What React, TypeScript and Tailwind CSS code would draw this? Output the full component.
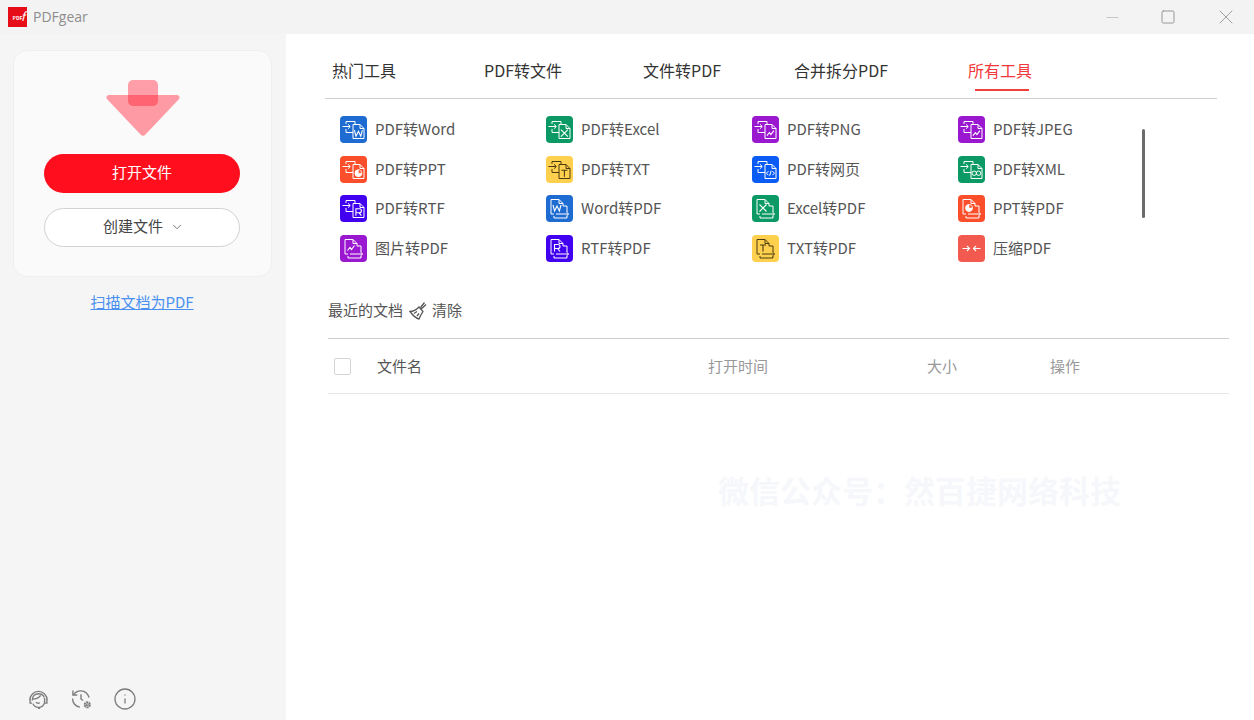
import { ChevronDown, Info, Minus, Square, X } from "lucide-react";

type Glyph = "w" | "x" | "p" | "t" | "r" | "img" | "code" | "xml";
type Tool = { label: string; color: string; dir: "from" | "to"; glyph: Glyph; ink?: string };

const tabs = ["热门工具", "PDF转文件", "文件转PDF", "合并拆分PDF", "所有工具"];

const tools: (Tool | { label: string; color: string; compress: true })[] = [
  { label: "PDF转Word", color: "bg-[#1e6bd2]", dir: "from", glyph: "w" },
  { label: "PDF转Excel", color: "bg-[#0b9a65]", dir: "from", glyph: "x" },
  { label: "PDF转PNG", color: "bg-[#9a18cf]", dir: "from", glyph: "img" },
  { label: "PDF转JPEG", color: "bg-[#9a18cf]", dir: "from", glyph: "img" },
  { label: "PDF转PPT", color: "bg-[#fb4f2c]", dir: "from", glyph: "p" },
  { label: "PDF转TXT", color: "bg-[#ffd04d]", dir: "from", glyph: "t", ink: "#4a3a10" },
  { label: "PDF转网页", color: "bg-[#0a5cf5]", dir: "from", glyph: "code" },
  { label: "PDF转XML", color: "bg-[#0b9a65]", dir: "from", glyph: "xml" },
  { label: "PDF转RTF", color: "bg-[#4200f0]", dir: "from", glyph: "r" },
  { label: "Word转PDF", color: "bg-[#1e6bd2]", dir: "to", glyph: "w" },
  { label: "Excel转PDF", color: "bg-[#0b9a65]", dir: "to", glyph: "x" },
  { label: "PPT转PDF", color: "bg-[#fb4f2c]", dir: "to", glyph: "p" },
  { label: "图片转PDF", color: "bg-[#9a18cf]", dir: "to", glyph: "img" },
  { label: "RTF转PDF", color: "bg-[#4200f0]", dir: "to", glyph: "r" },
  { label: "TXT转PDF", color: "bg-[#ffd04d]", dir: "to", glyph: "t", ink: "#4a3a10" },
  { label: "压缩PDF", color: "bg-[#f25a50]", compress: true },
];

function GlyphMark({ glyph, x, y, ink }: { glyph: Glyph; x: number; y: number; ink: string }) {
  const t = `translate(${x} ${y})`;
  if (glyph === "w") return <path transform={t} d="M-4-3l1.6 6L0-2l2.400 5L4-3" fill="none" stroke={ink} strokeWidth="1.100" />;
  if (glyph === "x") return <path transform={t} d="M-3.500-3.500l7 7M3.500-3.500l-7 7" fill="none" stroke={ink} strokeWidth="1.100" />;
  if (glyph === "t") return <path transform={t} d="M-3-3H3M0-3V3.500" fill="none" stroke={ink} strokeWidth="1.100" />;
  if (glyph === "r") return <path transform={t} d="M-2.500 3.500V-3.500H1a2 2 0 0 1 0 4H-2.500M.5 .5l2.500 3" fill="none" stroke={ink} strokeWidth="1.100" />;
  if (glyph === "p")
    return (
      <g transform={t}>
        <circle r="3.400" fill={ink} />
        <path d="M0 0V-3.400A3.400 3.400 0 0 1 3.400 0Z" fill="#fb4f2c" stroke={ink} strokeWidth=".5" />
      </g>
    );
  if (glyph === "img") return <path transform={t} d="M-3.500 2.500l2.500-3 1.500 2 3-4" fill="none" stroke={ink} strokeWidth="1.100" />;
  if (glyph === "code") return <path transform={t} d="M-2-2l-2 2 2 2M2-2l2 2-2 2M.8-2.500L-.8 2.500" fill="none" stroke={ink} strokeWidth="1" />;
  return (
    <g transform={t} fill="none" stroke={ink} strokeWidth="1">
      <circle cx="-2.200" r="2.200" />
      <circle cx="2.200" r="2.200" />
    </g>
  );
}

// two overlapping sheets with an arrow, same drawing for every convert tool
function ConvertIcon({ tool }: { tool: Tool }) {
  const ink = tool.ink ?? "#ffffff";
  return (
    <span className={`flex h-[27px] w-[27px] shrink-0 items-center justify-center rounded-[4px] ${tool.color}`}>
      <svg width="27" height="27" viewBox="0 0 27 27">
        {tool.dir === "from" ? (
          <g fill="none" stroke={ink} strokeWidth="1">
            <path d="M6 8V5.500H15V8.500M6 13V16.500H13" />
            <path d="M2.500 10.500H10M8 8.300l2.300 2.200L8 12.700" />
            <path d="M13 22.500V8.500H20l4 4V22.500Z" />
            <path d="M20 8.500V12.500H24" />
            <GlyphMark glyph={tool.glyph} x={18.4} y={17.2} ink={ink} />
          </g>
        ) : (
          <g fill="none" stroke={ink} strokeWidth="1">
            <path d="M5 19V4.500H13l4 4V11M5 19H8" />
            <path d="M13 4.500V8.500H17" />
            <path d="M17 11H21V17M21 21V23H8V21" />
            <path d="M10 19H22.500M20.300 16.800l2.300 2.200-2.300 2.200" />
            <GlyphMark glyph={tool.glyph} x={11} y={13} ink={ink} />
          </g>
        )}
      </svg>
    </span>
  );
}

function CompressIcon({ color }: { color: string }) {
  return (
    <span className={`flex h-[27px] w-[27px] shrink-0 items-center justify-center rounded-[4px] ${color}`}>
      <svg width="27" height="27" viewBox="0 0 27 27" fill="none" stroke="#ffffff" strokeWidth="1.100">
        <path d="M4.500 13.500H11.500M9 11l2.500 2.500L9 16" />
        <path d="M22.500 13.500H15.500M18 11l-2.500 2.500L18 16" />
      </svg>
    </span>
  );
}

function Sidebar() {
  return (
    <aside className="flex w-[286px] shrink-0 flex-col bg-[#f5f5f5] px-[12.500px] pt-4">
      <div className="flex h-[227px] w-[259px] flex-col items-center rounded-[14px] border border-[#efefef] bg-[#fafafa] pt-[29px]">
        <svg className="ml-[2px]" width="76" height="58" viewBox="0 0 76 58">
          <path d="M4 15H72a2.500 2.500 0 0 1 1.800 4.300L40.500 54.500a3.500 3.500 0 0 1-5 0L2.200 19.300A2.500 2.500 0 0 1 4 15Z" fill="#fe9aa3" />
          <rect x="23" y="0" width="30" height="26" rx="5" fill="#ff9ea8" />
          <path d="M23 15H53V21a5 5 0 0 1-5 5H28a5 5 0 0 1-5-5Z" fill="#ff6473" />
        </svg>
        <button className="mt-[15.500px] h-[39px] w-[196px] rounded-full bg-[#ff0f1e] pb-[2px] text-[15px] text-white">打开文件</button>
        <button className="mt-[15px] flex h-[39px] w-[196px] items-center justify-center gap-[7px] rounded-full border border-[#d2d2d2] bg-white pb-[2px] pl-[3px] text-[15px] text-[#444]">
          创建文件
          <ChevronDown size={14} strokeWidth={1.500} className="mt-[2px] text-[#666]" />
        </button>
      </div>
      <a className="mt-[14px] w-[259px] text-center text-[15px] text-[#4a90f0] underline">扫描文档为PDF</a>
      <div className="mt-auto mb-[9px] flex items-center pl-[15px] text-[#7d7d7d]">
        <svg width="21" height="21" viewBox="0 0 20 20" fill="none" stroke="currentColor" strokeWidth="1.300">
          <path d="M1.800 10.500A8.200 8.200 0 0 1 18.200 10.500" />
          <path d="M4 11c0-4 2.500-6.500 6-6.500 2.500 0 4.500 1.200 5.500 3.500" />
          <path d="M4 9.500c3.500 0 6.500-1 8-3.500M15.800 8.500V13c-.8 2.800-3 4.500-5.800 4.500-2.300 0-4.300-1.400-5.300-3.500" />
          <path d="M2 10v3.500h2M18 10v3.500h-2M7.500 12.500c.8 1 2.500 1.300 3.800.6M9.500 18.500h2" />
        </svg>
        <svg className="ml-[22px]" width="21" height="21" viewBox="0 0 20 20" fill="none" stroke="currentColor" strokeWidth="1.300">
          <path d="M2.500 5.500A8 8 0 0 1 16 5.500c.6.900 1 1.800 1.100 2.700M8.500 17.300A8 8 0 0 1 1.500 9" />
          <path d="M1.800 1.500v4.200H6M9.500 5v4.500l2 1.500" />
          <circle cx="15.500" cy="15" r="2.500" strokeWidth="1.800" strokeDasharray="2 .6" />
          <circle cx="15.500" cy="15" r="1" strokeWidth="1" />
        </svg>
        <Info size={24} strokeWidth={1.300} className="ml-[21px]" />
      </div>
    </aside>
  );
}

export default function App() {
  return (
    <div className="relative flex h-[720px] w-[1254px] flex-col overflow-hidden bg-white font-['Noto_Sans_CJK_SC','Open_Sans',sans-serif] text-[#555]">
      <header className="flex h-[34px] shrink-0 items-center bg-[#f3f3f3] pl-2">
        <span className="relative flex h-5 w-[19px] items-center justify-center overflow-hidden bg-[#e60c18]">
          <span className="text-[5px] leading-none font-bold text-white">PDF</span>
          <span className="absolute top-0 right-[2px] text-[12px] leading-[18px] text-white italic">f</span>
        </span>
        <span className="ml-[6px] pb-[2px] font-['Open_Sans',sans-serif] text-[14px] text-[#8d8d8d]">PDFgear</span>
        <div className="ml-auto flex items-center gap-[38px] pr-4 text-[#8a8a8a]">
          <Minus size={19} strokeWidth={1} className="text-[#bbb]" />
          <Square size={16} strokeWidth={1.300} />
          <X size={24} strokeWidth={.8} />
        </div>
      </header>

      <div className="flex min-h-0 flex-1">
        <Sidebar />
        <main className="min-w-0 flex-1 pt-4">
          <nav className="ml-[39px] flex h-[49px] w-[892px] items-start border-b border-[#cfcfcf] pt-[6px]">
            {tabs.map((tab, i) => (
              <div key={tab} className={`flex h-[35px] justify-center ${i === 0 ? "w-[118.500px] pr-[40.500px]" : "w-[159px]"}`}>
                <span
                  className={
                    i === 4
                      ? "relative h-[35px] text-[16px] leading-[28px] whitespace-nowrap text-[#f2383c]"
                      : "text-[16px] leading-[28px] whitespace-nowrap text-[#333]"
                  }
                >
                  {tab}
                  {i === 4 ? <span className="absolute bottom-0 left-[7px] h-[2px] w-[54px] bg-[#f2403f]" /> : null}
                </span>
              </div>
            ))}
          </nav>

          <div className="relative mt-[17px] ml-[54px] grid w-[824px] grid-cols-[repeat(4,206px)] gap-y-[12.500px]">
            {tools.map((tool) => (
              <div key={tool.label} className="flex h-[27px] items-center gap-2">
                {"compress" in tool ? <CompressIcon color={tool.color} /> : <ConvertIcon tool={tool} />}
                <span className="text-[15px] whitespace-nowrap text-[#555]">{tool.label}</span>
              </div>
            ))}
            <span className="absolute top-[13px] left-[802px] h-[89px] w-[3px] rounded-full bg-[#6b6b6b]" />
          </div>

          <section className="mt-[34.500px] ml-[42px] w-[901px]">
            <div className="flex h-[28px] items-center text-[15px] text-[#555]">
              最近的文档
              <svg className="mr-[4px] ml-[6px]" width="19" height="19" viewBox="0 0 19 19" fill="none" stroke="#555" strokeWidth="1.300">
                <path d="M11.500 6.500L15.500 1.500M17 3.500l-4.800 4.500" />
                <path d="M1 10.500c3 0 6-1.500 9-4.500l4 4.500c-2 3-3 5-4 7.500-3-.5-6-3.500-9-7.500Z" />
                <path d="M5 12.500l3-2M8 15l2-2.500" />
              </svg>
              清除
            </div>
            <div className="mt-[14px] flex h-[56px] items-center border-y border-t-[#cccccc] border-b-[#e6e6e6] text-[15px]">
              <span className="ml-[6px] h-[17px] w-[17px] rounded-[2px] border border-[#d4d4d4] bg-white" />
              <span className="ml-[26px] w-[331px] text-[#555]">文件名</span>
              <span className="w-[219px] text-[#999]">打开时间</span>
              <span className="w-[123px] text-[#999]">大小</span>
              <span className="text-[#999]">操作</span>
            </div>
          </section>
        </main>
      </div>

      <div className="pointer-events-none absolute top-[468px] left-[718px] text-[31px] leading-[44px] font-bold whitespace-nowrap text-[#f6f7fb]">
        微信公众号：然百捷网络科技
      </div>
    </div>
  );
}
